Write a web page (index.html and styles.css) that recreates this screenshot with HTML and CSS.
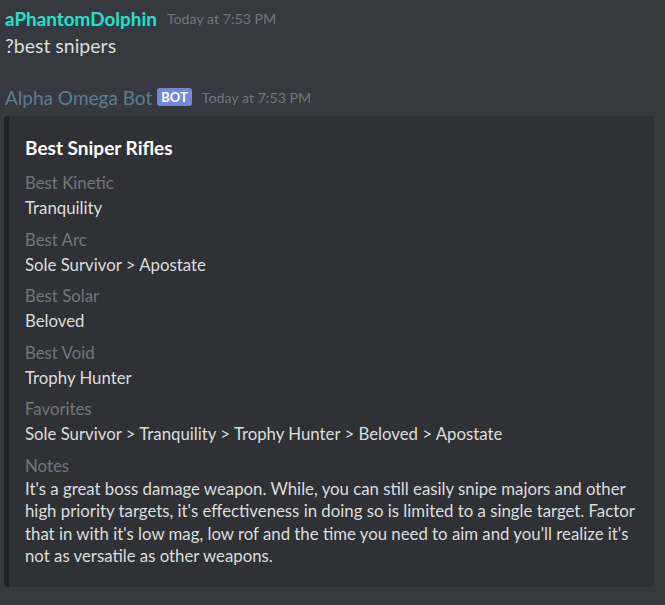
FILE: index.html
```html
<!DOCTYPE html>
<html>
<head>
<meta charset="utf-8">
<link rel="stylesheet" href="styles.css">
</head>
<body>
<div class="chat">
  <div class="msg">
    <div class="head">
      <span class="user user-dolphin">aPhantomDolphin</span>
      <span class="time">Today at 7:53 PM</span>
    </div>
    <div class="content">?best snipers</div>
  </div>
  <div class="msg msg-bot">
    <div class="head">
      <span class="user user-bot">Alpha Omega Bot</span>
      <span class="badge">BOT</span>
      <span class="time">Today at 7:53 PM</span>
    </div>
    <div class="embed">
      <div class="embed-title">Best Sniper Rifles</div>
      <div class="fields">
        <div class="field"><div class="fname">Best Kinetic</div><div class="fval">Tranquility</div></div>
        <div class="field"><div class="fname">Best Arc</div><div class="fval">Sole Survivor &gt; Apostate</div></div>
        <div class="field"><div class="fname">Best Solar</div><div class="fval">Beloved</div></div>
        <div class="field"><div class="fname">Best Void</div><div class="fval">Trophy Hunter</div></div>
        <div class="field"><div class="fname">Favorites</div><div class="fval">Sole Survivor &gt; Tranquility &gt; Trophy Hunter &gt; Beloved &gt; Apostate</div></div>
        <div class="field"><div class="fname">Notes</div><div class="fval notes">It's a great boss damage weapon. While, you can still easily snipe majors and other high priority targets, it's effectiveness in doing so is limited to a single target. Factor that in with it's low mag, low rof and the time you need to aim and you'll realize it's not as versatile as other weapons.</div></div>
      </div>
    </div>
  </div>
</div>
</body>
</html>
```
FILE: styles.css
```css
html, body {
  margin: 0;
  padding: 0;
  background: #36393f;
}
body {
  width: 665px;
  height: 605px;
  overflow: hidden;
  font-family: Lato, "Open Sans", sans-serif;
  color: #dcddde;
}
.chat {
  padding: 4px 11px 0 5px;
}
.msg-bot {
  margin-top: 25px;
}
.head {
  display: flex;
  align-items: center;
  height: 28px;
}
.user {
  font-size: 19px;
  font-weight: 700;
}
.user-dolphin {
  color: #1ee3ca;
  font-size: 18.9px;
}
.user-bot {
  color: #607d8b;
  font-weight: 400;
}
.time {
  margin-left: 10px;
  font-size: 14.2px;
  color: #72767d;
}
.badge {
  margin-left: 5px;
  background: #7289da;
  color: #fff;
  font-size: 13px;
  font-weight: 700;
  padding: 2px 4px;
  border-radius: 3px;
  line-height: 14px;
}
.badge + .time {
  margin-left: 10px;
}
.content {
  padding-top: 2px;
  font-size: 19.5px;
  line-height: 24px;
  color: #dcddde;
}
.embed {
  margin-top: 5px;
  margin-left: -1px;
  background: #2f3136;
  border-left: 5px solid #202225;
  border-radius: 4px;
  padding: 21px 16px 16px 16px;
  height: 471px;
  box-sizing: border-box;
}
.embed-title {
  color: #ffffff;
  font-weight: 700;
  font-size: 19px;
  line-height: 22px;
}
.fields {
  display: flex;
  flex-direction: column;
  gap: 6.5px;
  margin-top: 11px;
}
.fname {
  color: #72767d;
  font-size: 16.8px;
  line-height: 25px;
}
.fval {
  font-size: 16.8px;
  line-height: 25px;
  color: #dcddde;
}
.notes {
  line-height: 22.5px;
}
```
